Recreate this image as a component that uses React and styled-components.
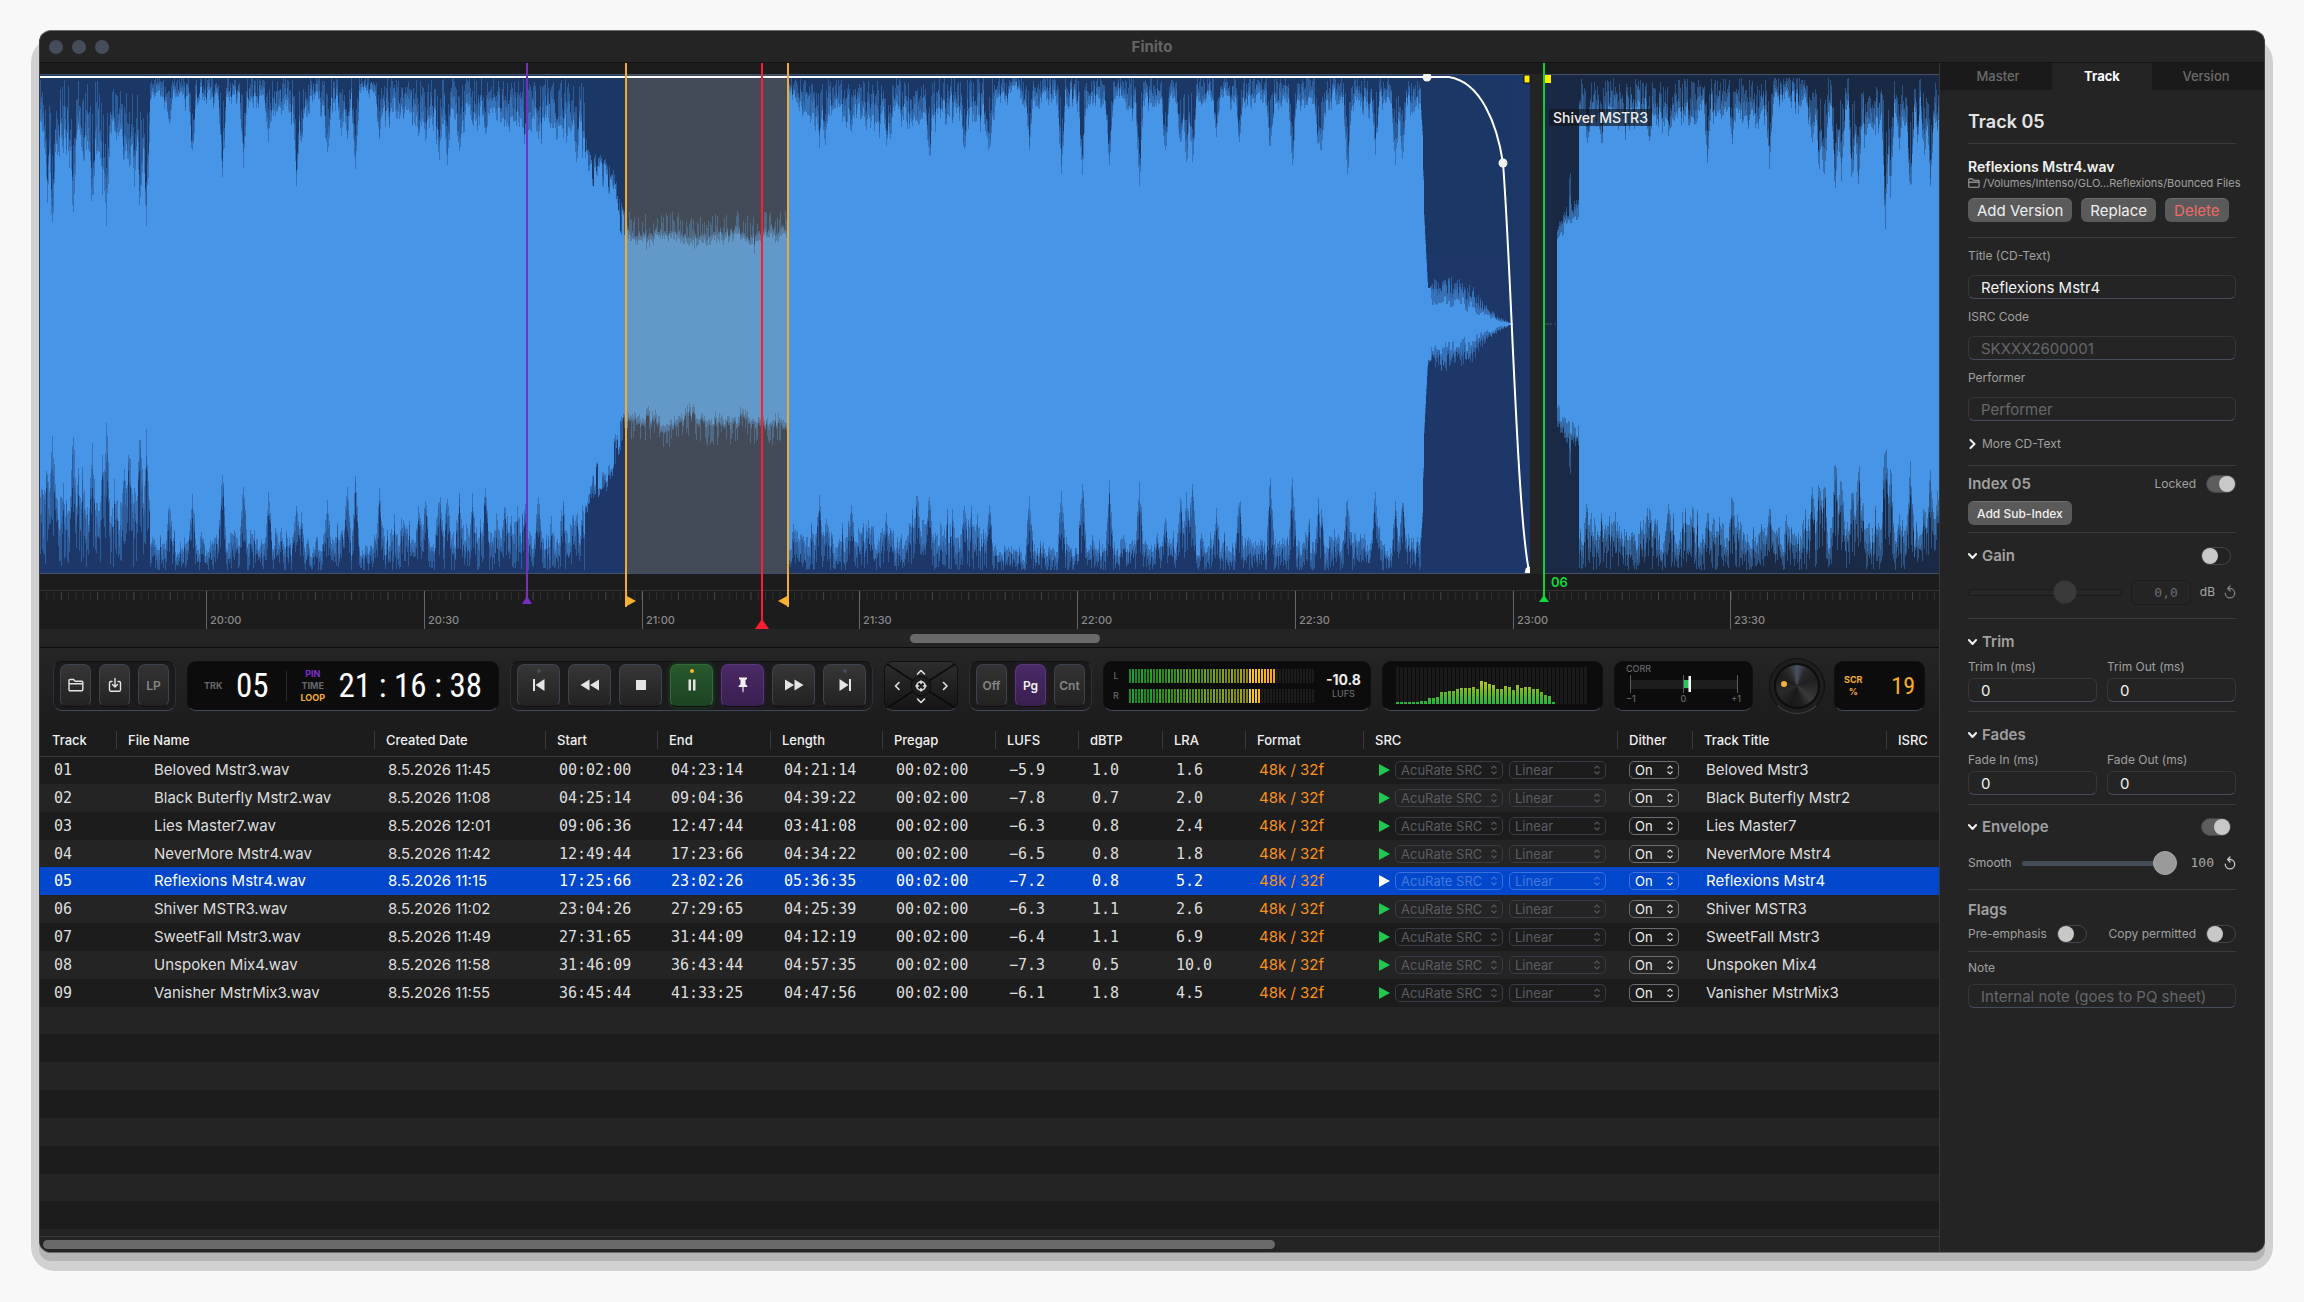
import React from "react";
import styled, { createGlobalStyle, css } from "styled-components";

const SANS = '"Inter", "Liberation Sans", sans-serif';
const NARROW = '"Liberation Sans Narrow", "Roboto Condensed", "Roboto", sans-serif';

const Global = createGlobalStyle`
  *, *::before, *::after { box-sizing: border-box; }
  html, body { margin: 0; background: #f8f8f8; }
  body { font-family: ${SANS}; font-size: 15px; color: #dedede; }
  button, input, select { font-family: inherit; margin: 0; }
`;

/* ---------- window ---------- */

const Page = styled.div`
  display: flex;
  min-height: 100vh;
  padding: 30px 39px 49px;
`;

const Window = styled.main`
  position: relative;
  z-index: 0;
  flex: 1;
  min-width: 0;
  display: flex;
  &::before {
    content: "";
    position: absolute;
    z-index: -1;
    inset: 8px -8px -18px;
    border-radius: 24px;
    background: #d1d1d1;
  }
`;

const Frame = styled.div`
  flex: 1;
  min-width: 0;
  display: flex;
  flex-direction: column;
  overflow: hidden;
  border: 1px solid #3c4049;
  border-top-color: #6a6d6f;
  border-bottom-color: #6a6d6f;
  border-radius: 12px;
  background: #242424;
  box-shadow: 0 8px 0 #b4b4b4;
`;

const TitleBar = styled.header`
  display: grid;
  grid-template-columns: 1fr auto 1fr;
  align-items: center;
  height: 32px;
  padding: 0 9px;
  border-bottom: 1px solid #151515;
`;

const Lights = styled.div`
  display: flex;
  gap: 9px;
`;

const Light = styled.button`
  width: 14px;
  height: 14px;
  padding: 0;
  border: 0;
  border-radius: 50%;
  background: #454c5a;
`;

const WindowTitle = styled.h1`
  margin: 0;
  font-size: 15px;
  line-height: 20px;
  font-weight: 700;
  color: #636466;
`;

const Body = styled.div`
  flex: 1;
  display: flex;
  min-height: 0;
`;

const Editor = styled.div`
  flex: 1;
  min-width: 0;
  display: flex;
  flex-direction: column;
  background: #1c1c1c;
`;

/* ---------- timeline ---------- */

const T0 = 40;
const SPAN = 1899;
const pct = (x) => `${((x - T0) / SPAN) * 100}%`;

const Timeline = styled.section`
  position: relative;
  padding-top: 11px;
  background: #1c1c1c;
`;

const Lane = styled.svg`
  display: block;
  width: 100%;
  height: 500px;
`;

const Ruler = styled.div`
  position: relative;
  height: 39px;
  margin-top: 16px;
  border-top: 1px solid #333;
`;

const RulerTicks = styled.svg`
  display: block;
  width: 100%;
  height: 38px;
`;

const RulerLabel = styled.span.attrs((p) => ({ style: { left: pct(p.$x) } }))`
  position: absolute;
  top: 20px;
  padding-left: 4px;
  font-size: 11px;
  line-height: 18px;
  font-weight: 500;
  color: #8a8a8a;
`;

const Marker = styled.div.attrs((p) => ({ style: { left: pct(p.$x) } }))`
  position: absolute;
  top: 0;
  width: 2px;
  margin-left: -1px;
  height: ${(p) => p.$h}px;
  background: ${(p) => p.$color};
`;

const Flag = styled.svg`
  position: absolute;
  bottom: 0;
  left: ${(p) => p.$left}px;
`;

const ClipName = styled.span.attrs((p) => ({ style: { left: pct(p.$x) } }))`
  position: absolute;
  top: 46px;
  padding: 0 4px;
  font-size: 14px;
  line-height: 17px;
  font-weight: 500;
  color: #eee;
  background: rgba(20, 22, 28, 0.65);
`;

const IndexTag = styled.span.attrs((p) => ({ style: { left: pct(p.$x) } }))`
  position: absolute;
  top: 510px;
  padding-left: 7px;
  font-size: 13px;
  line-height: 18px;
  font-weight: 600;
  color: #14d83c;
`;

const ScrollStrip = styled.div`
  display: flex;
  height: 19px;
  padding-top: 5px;
  background: #242424;
  border-bottom: 1px solid #0c0c0c;
`;

const TimelineThumb = styled.div`
  margin-left: 45.8%;
  width: 10%;
  height: 9px;
  border-radius: 5px;
  background: #6a6a6a;
`;

/* Deterministic pseudo random numbers, so that the wave is stable between renders. */
function hash(n) {
  const s = Math.sin(n * 127.1 + 311.7) * 43758.5453;
  return s - Math.floor(s);
}

/* Quiet moments: position, depth from the top edge, depth from the bottom edge. */
const NOTCHES = [
  [47, 130, 120], [52, 165, 162], [57, 90, 70], [66, 60, 80], [73, 155, 158], [78, 60, 110], [83, 105, 95], [92, 146, 140], [98, 70, 60], [102, 128, 120], [106, 166, 170],
  [116, 80, 90], [124, 100, 128], [129, 108, 138], [134, 120, 100], [140, 150, 160], [146, 152, 148],
  [169, 60, 80], [192, 85, 84], [222, 104, 106], [243, 95, 103], [268, 76, 86], [296, 112, 78],
  [301, 76, 64], [327, 96, 84], [341, 75, 50], [347, 70, 98], [355, 102, 99], [379, 72, 86], [418, 70, 70], [425, 76, 80], [439, 90, 88], [447, 100, 86],
  [459, 94, 82], [472, 60, 84], [485, 64, 88], [504, 60, 76], [524, 70, 64], [538, 72, 88], [563, 60, 74], [576, 104, 70],
  [819, 76, 80], [825, 78, 50], [851, 68, 76], [886, 74, 64], [890, 74, 50], [917, 58, 90], [929, 94, 84], [964, 86, 78], [989, 90, 74],
  [1029, 78, 86], [1061, 104, 94], [1082, 102, 104], [1109, 90, 94], [1139, 114, 98], [1165, 86, 62], [1180, 80, 84], [1186, 98, 90], [1192, 96, 106], [1216, 64, 70],
  [1239, 72, 86], [1270, 86, 104], [1292, 100, 106], [1318, 80, 76], [1321, 90, 66], [1347, 112, 88], [1375, 82, 88], [1395, 102, 74], [1402, 98, 82],
  [1587, 76, 64], [1601, 80, 60], [1649, 80, 74], [1668, 64, 84], [1707, 96, 70], [1732, 76, 92], [1769, 98, 78],
  [1812, 84, 94], [1819, 104, 104], [1824, 122, 98], [1835, 124, 130], [1841, 116, 114], [1852, 120, 100], [1858, 122, 126], [1885, 158, 150], [1890, 132, 124],
  [1899, 84, 64], [1910, 128, 120], [1924, 94, 74], [1930, 116, 116], [1937, 60, 90],
];

function notch(x, side) {
  let d = 0;
  for (const n of NOTCHES) {
    const k = 1 - Math.abs(x - n[0]) / 4;
    if (k > 0) d = Math.max(d, n[side] * Math.pow(k, 0.5));
  }
  return d;
}

function lerp(x, pts) {
  for (let i = 1; i < pts.length; i++) {
    if (x <= pts[i][0]) {
      const [a, b] = pts[i - 1];
      const [c, d] = pts[i];
      return b + ((d - b) * (x - a)) / (c - a);
    }
  }
  return pts[pts.length - 1][1];
}

const BASE_TOP = [[40, 78], [146, 78], [150, 34], [240, 32], [250, 40], [350, 38], [365, 18], [372, 26], [380, 50], [430, 62], [500, 56], [585, 68],
  [790, 26], [810, 54], [900, 50], [990, 56], [1015, 18], [1030, 40], [1200, 36], [1420, 40], [1579, 56], [1680, 52], [1770, 56], [1776, 28], [1805, 44], [1815, 62], [1939, 56]];
const BASE_BOTTOM = [[40, 92], [146, 88], [150, 40], [350, 42], [370, 28], [380, 54], [585, 56], [790, 50], [980, 60], [1000, 30], [1420, 46],
  [1579, 62], [1800, 56], [1939, 60]];

/* Distances from the lane's edge: the body, the middle peaks and the highest peaks. */
function column(x, side) {
  const r1 = hash(x * 2 + side * 1000);
  const r2 = hash(x * 3 + side * 2000 + 7);
  const r3 = hash(Math.floor(x / 2) + side * 3000);
  const r4 = hash(Math.floor(x / 5) * 7 + side * 4000);
  if (x > 584 && x <= 627) {
    const base = lerp(x, [[584, 56], [588, 70], [600, 78], [612, 90], [618, 115], [627, 148]]);
    const body = Math.min(base + 4 + r3 * 34, 160);
    return [body, body - r1 * 10, r2 > 0.5 ? body - r1 * 10 : base + r1 * 10];
  }
  if (x > 627 && x < 789) {
    const body = (side === 1 ? 156 : 148) + Math.sin(x / 9) * 3 + r3 * 8 + r1 * r4 * 14;
    return [body, body - 2 - r1 * 6, body - 4 - (r2 > 0.6 ? r2 * 20 : r1 * 6)];
  }
  if (x > 1420 && x <= 1427) {
    const v = lerp(x, [[1420, 30], [1422, 60], [1424, 150], [1427, 207]]);
    return [v, v - 4, v - 10];
  }
  if (x > 1427 && x <= 1513) {
    const peak = lerp(x, [[1427, 205], [1450, 200], [1472, 210], [1482, 226], [1497, 240], [1513, 249]]);
    const room = 249 - peak;
    const body = x < 1431 ? peak + 8 : peak + room * (0.3 + 0.25 * r3 + 0.2 * r4);
    return [Math.min(248, body), Math.min(248, peak + room * 0.3 * (r1 + r4)), Math.min(248, peak + r1 * room * 0.4)];
  }
  if (x > 1513 && x < 1557) return [249, 249, 249];
  if (x >= 1557 && x < 1579) {
    const v = lerp(x, [[1557, 170], [1566, 156], [1579, 148]]);
    const lift = x > 1568 && x < 1571 ? 34 : 0;
    return [v - r3 * 14, v - 12 - r1 * 8 - lift / 2, v - 14 - r1 * 12 - lift];
  }
  const base = lerp(x, side === 1 ? BASE_TOP : BASE_BOTTOM);
  const soft = base * (0.3 + 0.35 * r3 + 0.35 * r4 + 0.45 * r1 * r1 * r2);
  const quiet = notch(x, side) * (0.8 + r1 * 0.2);
  const body = Math.max(soft, quiet);
  if (quiet > soft * 1.1) {
    return [body, body * (0.7 + r2 * 0.25), body * (0.25 + r1 * 0.65)];
  }
  return [body, body * (0.45 + r2 * 0.5), Math.max(3, body * (0.08 + Math.pow(r1, 1.2) * 0.7))];
}

/* One vertical stroke for each pixel column. */
function wave(from, to, layer) {
  const out = [];
  for (let x = from; x < to; x++) {
    const t = Math.max(3, Math.min(column(x, 1)[layer], 249));
    const b = Math.max(3, Math.min(column(x, 2)[layer], 249));
    out.push(`M${x - T0}.5 ${Math.round(t) + 1}V${Math.round(499 - b)}`);
  }
  return out.join("");
}

const WAVES = [
  [40, 627, "#4795e6"],
  [627, 789, "#6399c8"],
  [789, 1513, "#4795e6"],
  [1557, 1940, "#4795e6"],
].map(([a, b, color]) => ({ color, high: wave(a, b, 2), mid: wave(a, b, 1), body: wave(a, b, 0) }));

const MAJOR = [
  [206, "20:00"], [424, "20:30"], [642, "21:00"], [859, "21:30"],
  [1077, "22:00"], [1295, "22:30"], [1513, "23:00"], [1730, "23:30"],
];

function TimelineView() {
  const minor = [];
  for (let i = 0; i < 262; i++) {
    const x = 206 - 22 * 7.26 + i * 7.26;
    if (x < 1938) minor.push(<rect key={i} x={x - T0} y="1" width="1" height="8" fill={i % 5 === 2 ? "#444" : "#2f2f2f"} />);
  }
  return (
    <Timeline aria-label="Timeline">
      <Lane viewBox={`0 0 ${SPAN} 500`} preserveAspectRatio="none" role="img" aria-label="Waveform">
        <rect width="1490" height="500" fill="#1c3768" />
        <rect x="586" width="163" height="500" fill="#444b58" />
        <rect x="1490" width="15" height="500" fill="#242424" />
        <rect x="1505" width="394" height="500" fill="#1a2945" />
        {WAVES.map((w, i) => (
          <g key={i} stroke={w.color}>
            <path d={w.high} opacity="0.4" />
            <path d={w.mid} opacity="0.4" />
            <path d={w.body} />
          </g>
        ))}
        <path d="M1505 250h11" stroke="#46536b" strokeDasharray="7 2" />
        <path d="M0 .5h1490M1505 .5h394M0 499.5h1490M1505 499.5h394" stroke="#43506a" />
        <path d="M0 3H1409C1441 8 1457 50 1463 89C1471 190 1477 440 1489 497" fill="none" stroke="#fff" strokeWidth="2" />
        <circle cx="1387" cy="3" r="4.5" fill="#f2f2f2" />
        <circle cx="1463" cy="89" r="4.5" fill="#f2f2f2" />
        <path d="M1485 499a4 5 0 0 1 5-6v6z" fill="#fff" />
        <rect x="1484" y="1" width="6" height="8" fill="#ffee00" stroke="#111" strokeWidth="1" />
        <rect x="1505" y="1" width="6" height="8" fill="#ffee00" />
      </Lane>
      <Ruler>
        <RulerTicks viewBox={`0 0 ${SPAN} 38`} preserveAspectRatio="none" aria-hidden="true">
          {minor}
          {MAJOR.map(([x]) => (
            <rect key={x} x={x - T0} width="1" height="38" fill="#666" />
          ))}
        </RulerTicks>
        {MAJOR.map(([x, t]) => (
          <RulerLabel key={t} $x={x}>{t}</RulerLabel>
        ))}
      </Ruler>
      <ClipName $x={1549}>Shiver MSTR3</ClipName>
      <IndexTag $x={1544}>06</IndexTag>
      <Marker $x={527} $h={541} $color="#7a2cc4">
        <Flag $left={-4} width="10" height="8" viewBox="0 0 10 8"><path d="M5 0l5 8H0z" fill="#7a2cc4" /></Flag>
      </Marker>
      <Marker $x={626} $h={544} $color="#f0ab34">
        <Flag $left={0} width="11" height="12" viewBox="0 0 11 12"><path d="M0 0l11 6-11 6z" fill="#f7b233" /></Flag>
      </Marker>
      <Marker $x={788} $h={544} $color="#f0ab34">
        <Flag $left={-9} width="11" height="12" viewBox="0 0 11 12"><path d="M11 0L0 6l11 6z" fill="#f7b233" /></Flag>
      </Marker>
      <Marker $x={762} $h={566} $color="#fa1e32">
        <Flag $left={-6} width="14" height="10" viewBox="0 0 14 10"><path d="M7 0l7 10H0z" fill="#fa1e32" /></Flag>
      </Marker>
      <Marker $x={1544} $h={539} $color="#10cf38">
        <Flag $left={-4} width="10" height="7" viewBox="0 0 10 7"><path d="M5 0l5 7H0z" fill="#14d83c" /></Flag>
      </Marker>
    </Timeline>
  );
}

/* ---------- toolbar ---------- */

const Toolbar = styled.div`
  display: flex;
  align-items: center;
  gap: 11px;
  height: 77px;
  padding: 0 14px 2px 13px;
  background: linear-gradient(#252525, #1c1c1c);
`;

const panel = css`
  flex: none;
  height: 50px;
  border: 1px solid #101010;
  border-bottom-color: #424a5a;
  border-radius: 9px;
`;

const KeyGroup = styled.div`
  ${panel}
  display: flex;
  gap: 8px;
  padding: 2px 6px 3px;
  background: #1b1b1b;
  border-left-color: #2c3038;
  border-right-color: #2c3038;
`;

const TONES = {
  plain: ["linear-gradient(#363636, #222)", "#3d4350", "#e4e4e4", "none"],
  dim: ["linear-gradient(#333, #222)", "#3d4350", "#868686", "none"],
  green: ["linear-gradient(#27592c, #1d4323)", "#34693a", "#e4e4e4", "0 0 5px #1f4d25"],
  purple: ["linear-gradient(#4a2a66, #391f50)", "#583a78", "#f2f2f2", "0 0 5px #2f1a42"],
};

const Key = styled.button`
  position: relative;
  display: grid;
  place-items: center;
  width: ${(p) => (p.$wide ? 43 : 31)}px;
  height: 43px;
  padding: 0;
  border: 1px solid ${(p) => TONES[p.$tone][1]};
  border-bottom-color: #111;
  border-radius: 7px;
  background: ${(p) => TONES[p.$tone][0]};
  color: ${(p) => TONES[p.$tone][2]};
  box-shadow: ${(p) => TONES[p.$tone][3]};
  font-size: 12px;
  font-weight: 600;
`;

const Led = styled.span`
  position: absolute;
  top: 4px;
  width: 4px;
  height: 4px;
  border-radius: 50%;
  background: ${(p) => (p.$lit ? "#ffb52e" : "#454c5a")};
`;

const Display = styled.div`
  ${panel}
  display: flex;
  align-items: center;
  justify-content: ${(p) => (p.$spread ? "space-between" : "flex-start")};
  gap: ${(p) => p.$gap || 0}px;
  width: ${(p) => p.$w}px;
  padding: 0 ${(p) => p.$px}px;
  background: #0c0c0c;
`;

const Digits = styled.span`
  font-family: ${NARROW};
  font-size: ${(p) => (p.$small ? 24 : 33)}px;
  line-height: 36px;
  color: ${(p) => p.$color || "#fff"};
  white-space: pre;
`;

const Rule = styled.span`
  width: 1px;
  height: 30px;
  margin-left: 4px;
  background: #2a2a2a;
`;

const Stack = styled.div`
  display: flex;
  flex-direction: column;
  align-items: center;
`;

const Tiny = styled.span`
  font-size: 9px;
  line-height: ${(p) => p.$lh || 12}px;
  font-weight: ${(p) => (p.$thin ? 500 : 700)};
  color: ${(p) => p.$color || "#66686c"};
`;

const Pad = styled.div`
  ${panel}
  width: 74px;
  padding: 2px;
  background: linear-gradient(#2d2d2d, #151515);
`;

const Loudness = styled.span`
  font-size: 14px;
  line-height: 16px;
  font-weight: 700;
  color: #eee;
`;

const Meters = styled.svg`
  flex: none;
`;

const Knob = styled.div`
  flex: none;
  display: grid;
  place-items: center;
  width: 56px;
  height: 56px;
  margin: 0 -2px 0 5px;
  border-radius: 50%;
  border: 1px solid #111;
  border-bottom-color: #444;
  background: #1e1e1e;
`;

const KnobFace = styled.div`
  display: flex;
  align-items: center;
  width: 46px;
  height: 46px;
  padding: 0 0 3px 5px;
  border-radius: 50%;
  border: 2px solid #0d0d0d;
  background: conic-gradient(#4a5264, #2a2a2a 28deg, #202020 70deg, #2b2b2b 100deg, #3a3a3a 135deg, #1f1f1f 165deg, #191919 200deg, #2a2a2a 250deg, #1d1d1d 300deg, #2a2a2a 332deg, #4a5264);
`;

const KnobDot = styled.span`
  width: 6px;
  height: 6px;
  border-radius: 50%;
  background: #f7b233;
`;

const CorrBox = styled.div`
  ${panel}
  width: 139px;
  padding: 1px 11px 0;
  background: #0c0c0c;
`;

const CorrScale = styled.div`
  display: flex;
  justify-content: space-between;
`;

const CorrBar = styled.svg`
  display: block;
  margin-left: 4px;
`;

const Ico = ({ children, w = 20, h = 20 }) => (
  <svg width={w} height={h} viewBox={`0 0 ${w} ${h}`} fill="currentColor" aria-hidden="true">{children}</svg>
);

const FolderIcon = ({ s = 16 }) => (
  <svg width={s} height={s} viewBox="0 0 16 16" fill="none" stroke="currentColor" strokeWidth="1.4" strokeLinejoin="round" aria-hidden="true">
    <path d="M1 12.5v-9q0-1 1-1h3.6l1.6 1.8h6.6q1 0 1 1v7.2q0 1.200-1.200 1.200H2.200Q1 13.700 1 12.500zM1 6.800h13.800" />
  </svg>
);

const ImportIcon = () => (
  <svg width="16" height="16" viewBox="0 0 16 16" fill="none" stroke="currentColor" strokeWidth="1.400" strokeLinecap="round" strokeLinejoin="round" aria-hidden="true">
    <path d="M5 4.500H3.800Q2.500 4.500 2.500 5.800v7q0 1.400 1.300 1.400h8.400q1.300 0 1.300-1.400v-7q0-1.300-1.300-1.300H11M8 1.500v8.300M5.500 7.500L8 10l2.500-2.500" />
  </svg>
);

const TRANSPORT = [
  ["Previous track", "plain", <path d="M4 4h2v12H4zM15.500 4v12L6.500 10z" />, "off"],
  ["Rewind", "plain", <path d="M9.500 4.500v11L.500 10zM19 4.500v11L10 10z" />],
  ["Stop", "plain", <path d="M5 5h10v10H5z" />],
  ["Pause", "green", <path d="M6.500 4.500h2.500v11H6.500zM11 4.500h2.500v11H11z" />, "on"],
  ["Pin", "purple", <path d="M6 2.500h8v1.600l-1.500 1v4.200q2 1 2 2.700h-3.900V16L10 18l-.600-2v-4H5.500q0-1.700 2-2.700V5.100L6 4.100z" />],
  ["Fast forward", "plain", <path d="M1 4.500v11l9-5.500zM10.500 4.500v11l9-5.500z" />],
  ["Next track", "plain", <path d="M4.500 4v12l9-6zM14 4h2v12h-2z" />, "off"],
];

function MeterBars() {
  const out = [];
  [49, 44].forEach((lit, row) => {
    for (let i = 0; i < 62; i++) {
      const on = i < lit;
      const hue = i < 40 ? 132 - i * 1.9 : 48 - (i - 40) * 1.4;
      const light = i < 40 ? (i % 3 === 1 ? 38 : 32) : 54;
      const fill = on ? `hsl(${hue} ${i < 40 ? 68 : 92}% ${light}%)` : "#1c1c1c";
      out.push(<rect key={`${row}-${i}`} x={i * 3} y={row * 20} width="2" height="14" fill={fill} />);
    }
  });
  return <Meters width="186" height="34" viewBox="0 0 186 34" role="img" aria-label="Level meters">{out}</Meters>;
}

const SPECTRUM = [2, 2, 2, 2, 2, 2, 3, 3, 6, 6, 7, 12, 12, 13, 13, 15, 16, 16, 16, 17, 15, 23, 22, 20, 19, 15, 15, 18, 17, 14, 19, 16, 17, 17, 15, 15, 12, 9, 8, 2, 0, 0, 0, 0, 0, 0, 0, 0];

function Spectrum() {
  return (
    <Meters width="192" height="37" viewBox="0 0 192 37" role="img" aria-label="Spectrum">
      <defs>
        <linearGradient id="spec" gradientUnits="userSpaceOnUse" x1="0" y1="37" x2="0" y2="12">
          <stop offset="0" stopColor="#1fb53a" />
          <stop offset="0.500" stopColor="#6fb52a" />
          <stop offset="1" stopColor="#d8c62c" />
        </linearGradient>
      </defs>
      {SPECTRUM.map((h, i) => (
        <g key={i}>
          <rect x={i * 4} width="3" height="37" fill="#191919" />
          <rect x={i * 4} y={37 - h} width="3" height={h} fill="url(#spec)" />
        </g>
      ))}
    </Meters>
  );
}

function ToolbarView() {
  return (
    <Toolbar role="toolbar" aria-label="Transport">
      <KeyGroup>
        <Key $tone="plain" aria-label="Open"><FolderIcon /></Key>
        <Key $tone="plain" aria-label="Import"><ImportIcon /></Key>
        <Key $tone="dim">LP</Key>
      </KeyGroup>
      <Display $w={312} $px={16} $spread>
        <Tiny>TRK</Tiny>
        <Digits>05</Digits>
        <Rule />
        <Stack>
          <Tiny $color="#7d2ccb">PIN</Tiny>
          <Tiny>TIME</Tiny>
          <Tiny $color="#f5ae2e">LOOP</Tiny>
        </Stack>
        <Digits>21 : 16 : 38</Digits>
      </Display>
      <KeyGroup>
        {TRANSPORT.map(([label, tone, shape, led]) => (
          <Key key={label} $wide $tone={tone} aria-label={label}>
            {led && <Led $lit={led === "on"} />}
            <Ico>{shape}</Ico>
          </Key>
        ))}
      </KeyGroup>
      <Pad role="img" aria-label="Navigation pad">
        <svg width="68" height="44" viewBox="0 0 68 44" fill="none">
          <path d="M0 0l68 44M68 0L0 44" stroke="#0a0a0a" strokeWidth="1.500" />
          <circle cx="34" cy="22" r="10" fill="#1c1c1c" stroke="#0d0d0d" />
          <g stroke="#e4e4e4" strokeWidth="1.600" strokeLinecap="round" strokeLinejoin="round">
            <circle cx="34" cy="22" r="4.200" />
            <path d="M34 17v2.500M34 24.500V27M29 22h2.500M36.500 22H39" />
            <path d="M30.500 10l3.500-3.500 3.500 3.500M30.500 35l3.500 3.500 3.500-3.500M12 18.500L8.500 22l3.500 3.500M56.500 18.500L60 22l-3.500 3.500" />
          </g>
        </svg>
      </Pad>
      <KeyGroup>
        <Key $tone="dim">Off</Key>
        <Key $tone="purple">Pg</Key>
        <Key $tone="dim">Cnt</Key>
      </KeyGroup>
      <Display $w={268} $px={9} $spread>
        <Stack>
          <Tiny $lh={20} $thin>L</Tiny>
          <Tiny $lh={20} $thin>R</Tiny>
        </Stack>
        <MeterBars />
        <Stack>
          <Loudness>-10.8</Loudness>
          <Tiny $thin>LUFS</Tiny>
        </Stack>
      </Display>
      <Display $w={221} $px={13}>
        <Spectrum />
      </Display>
      <CorrBox>
        <Tiny as="div" $thin>CORR</Tiny>
        <CorrBar width="108" height="18" viewBox="0 0 108 18" role="img" aria-label="Correlation">
          <rect y="5" width="108" height="9" fill="#1d1d1d" />
          <path d="M.500 0v18M53.500 0v18M107.500 0v18" stroke="#5a5c60" />
          <rect x="54" y="5" width="5" height="8" fill="#27c65a" />
          <rect x="58.500" y="1" width="2.500" height="16" fill="#fff" />
        </CorrBar>
        <CorrScale>
          <Tiny $thin>−1</Tiny>
          <Tiny $thin>0</Tiny>
          <Tiny $thin>+1</Tiny>
        </CorrScale>
      </CorrBox>
      <Knob role="img" aria-label="Scrub knob"><KnobFace><KnobDot /></KnobFace></Knob>
      <Display $w={91} $px={9} $spread>
        <Stack>
          <Tiny $color="#f5ae2e">SCR</Tiny>
          <Tiny $color="#f5ae2e">%</Tiny>
        </Stack>
        <Digits $small $color="#f5ae2e">19</Digits>
      </Display>
    </Toolbar>
  );
}

/* ---------- track table ---------- */

const TableArea = styled.div`
  flex: 1 1 0;
  min-height: 0;
  overflow: hidden;
`;

const Table = styled.table`
  width: 100%;
  table-layout: fixed;
  border-collapse: collapse;
`;

const Th = styled.th`
  height: 31px;
  padding: 0;
  border-bottom: 1px solid #3a3a3a;
  text-align: left;
  font-size: 13px;
  font-weight: 500;
  color: #f0f0f0;
  white-space: nowrap;
`;

const ThText = styled.span`
  display: block;
  padding-left: 11px;
  line-height: 18px;
  border-left: 1px solid ${(p) => (p.$first ? "transparent" : "#3a3a3a")};
`;

const Tr = styled.tr`
  height: 28px;
  background: ${(p) => (p.$selected ? "#0047cc" : p.$odd ? "#1c1c1c" : "#242424")};
  color: ${(p) => (p.$selected ? "#fff" : "#dedede")};
  &:nth-child(6n + 4) { height: 27px; }
`;

const Td = styled.td`
  padding: 0 0 0 ${(p) => p.$pad || 14}px;
  font-size: 15px;
  line-height: 20px;
  white-space: nowrap;
  color: ${(p) => (p.$amber ? "#f7921e" : "inherit")};
  ${(p) => p.$mono && css`
    font-family: "DejaVu Sans Mono", "Liberation Mono", monospace;
  `}
`;

const Controls = styled.div`
  display: flex;
  align-items: center;
  gap: 6px;
`;

const Play = styled.svg`
  flex: none;
  margin-right: -1px;
  color: ${(p) => (p.$selected ? "#fff" : "#1fc84e")};
`;

const Picker = styled.span`
  position: relative;
  display: inline-flex;
  color: ${(p) => (p.$selected ? (p.$dim ? "#4478da" : "#fff") : p.$dim ? "#5a5d62" : "#f0f0f0")};
  svg { position: absolute; right: 5px; top: 4px; opacity: 0.9; pointer-events: none; }
`;

const Select = styled.select`
  appearance: none;
  width: ${(p) => p.$w}px;
  height: 18px;
  padding: 0 5px;
  border: 1px solid ${(p) => (p.$selected ? "#3a70dd" : p.$dim ? "#363b45" : "#6a6c70")};
  border-radius: 5px;
  background: transparent;
  color: inherit;
  opacity: 1;
  font-size: 13px;
  line-height: 16px;
`;

const HScroll = styled.div`
  height: 16px;
  padding: 3px 0 0 3px;
  border-top: 1px solid #383838;
  background: #242424;
`;

const HThumb = styled.div`
  width: 65%;
  height: 9px;
  border-radius: 5px;
  background: #6a6a6a;
`;

const COLUMNS = [
  ["Track", 76], ["File Name", 258], ["Created Date", 171], ["Start", 112], ["End", 113], ["Length", 112], ["Pregap", 113],
  ["LUFS", 83], ["dBTP", 84], ["LRA", 83], ["Format", 118], ["SRC", 254], ["Dither", 75], ["Track Title", 194], ["ISRC", null],
];

const TRACKS = [
  ["01", "Beloved Mstr3", "8.5.2026 11:45", "00:02:00", "04:23:14", "04:21:14", "−5.9", "1.0", "1.6"],
  ["02", "Black Buterfly Mstr2", "8.5.2026 11:08", "04:25:14", "09:04:36", "04:39:22", "−7.8", "0.7", "2.0"],
  ["03", "Lies Master7", "8.5.2026 12:01", "09:06:36", "12:47:44", "03:41:08", "−6.3", "0.8", "2.4"],
  ["04", "NeverMore Mstr4", "8.5.2026 11:42", "12:49:44", "17:23:66", "04:34:22", "−6.5", "0.8", "1.8"],
  ["05", "Reflexions Mstr4", "8.5.2026 11:15", "17:25:66", "23:02:26", "05:36:35", "−7.2", "0.8", "5.2"],
  ["06", "Shiver MSTR3", "8.5.2026 11:02", "23:04:26", "27:29:65", "04:25:39", "−6.3", "1.1", "2.6"],
  ["07", "SweetFall Mstr3", "8.5.2026 11:49", "27:31:65", "31:44:09", "04:12:19", "−6.4", "1.1", "6.9"],
  ["08", "Unspoken Mix4", "8.5.2026 11:58", "31:46:09", "36:43:44", "04:57:35", "−7.3", "0.5", "10.0"],
  ["09", "Vanisher MstrMix3", "8.5.2026 11:55", "36:45:44", "41:33:25", "04:47:56", "−6.1", "1.8", "4.5"],
];

const EMPTY_ROWS = [9, 10, 11, 12, 13, 14, 15, 16, 17];

function PopUp({ label, value, width, dim, selected }) {
  return (
    <Picker $dim={dim} $selected={selected}>
      <Select aria-label={label} $w={width} $dim={dim} $selected={selected} disabled={dim} defaultValue={value}>
        <option>{value}</option>
      </Select>
      <svg width="8" height="10" viewBox="0 0 8 10" fill="none" stroke="currentColor" strokeWidth="1.200" aria-hidden="true">
        <path d="M1.500 3.500L4 1l2.500 2.500M1.500 6.500L4 9l2.500-2.500" />
      </svg>
    </Picker>
  );
}

function TrackTable() {
  return (
    <TableArea>
      <Table>
        <colgroup>
          {COLUMNS.map(([name, w]) => <col key={name} width={w || undefined} />)}
        </colgroup>
        <thead>
          <tr>
            {COLUMNS.map(([name], i) => (
              <Th key={name} scope="col"><ThText $first={i === 0}>{name}</ThText></Th>
            ))}
          </tr>
        </thead>
        <tbody>
          {TRACKS.map(([no, name, date, start, end, length, lufs, dbtp, lra], i) => {
            const selected = no === "05";
            return (
              <Tr key={no} $odd={i % 2 === 0} $selected={selected} aria-selected={selected}>
                <Td $mono>{no}</Td>
                <Td $pad={38}>{name}.wav</Td>
                <Td>{date}</Td>
                <Td $mono>{start}</Td>
                <Td $mono>{end}</Td>
                <Td $mono>{length}</Td>
                <Td $mono>00:02:00</Td>
                <Td $mono>{lufs}</Td>
                <Td $mono>{dbtp}</Td>
                <Td $mono>{lra}</Td>
                <Td $amber>48k / 32f</Td>
                <Td $pad={16}>
                  <Controls>
                    <Play $selected={selected} width="11" height="12" viewBox="0 0 11 12" aria-hidden="true"><path d="M0 0l11 6-11 6z" fill="currentColor" /></Play>
                    <PopUp label={`SRC engine ${no}`} value="AcuRate SRC" width={108} dim selected={selected} />
                    <PopUp label={`SRC phase ${no}`} value="Linear" width={97} dim selected={selected} />
                  </Controls>
                </Td>
                <Td $pad={12}>
                  <Controls><PopUp label={`Dither ${no}`} value="On" width={50} selected={selected} /></Controls>
                </Td>
                <Td>{name}</Td>
                <Td />
              </Tr>
            );
          })}
          {EMPTY_ROWS.map((i) => (
            <Tr key={i} $odd={i % 2 === 0} aria-hidden="true"><Td colSpan={15} /></Tr>
          ))}
        </tbody>
      </Table>
    </TableArea>
  );
}

/* ---------- inspector ---------- */

const Inspector = styled.aside`
  flex: none;
  width: 325px;
  border-left: 1px solid #383838;
  background: #242424;
`;

const Tabs = styled.div`
  display: grid;
  grid-template-columns: 1fr 100px 1fr;
`;

const Tab = styled.button`
  height: 27px;
  padding: 0 0 2px;
  border: 0;
  font-size: 13px;
  font-weight: ${(p) => (p.$active ? 700 : 500)};
  color: ${(p) => (p.$active ? "#fff" : "#6c6c6c")};
  background: ${(p) => (p.$active ? "#242424" : "#1a1a1a")};
  &:first-child { padding-left: 4px; }
  &:last-child { padding-right: 4px; }
`;

const Content = styled.div`
  padding: 18px 28px 0;
`;

const Section = styled.section`
  display: flex;
  flex-direction: column;
  height: ${(p) => p.$h}px;
  padding-top: ${(p) => p.$pt || 0}px;
  border-bottom: ${(p) => (p.$last ? "0" : "1px solid #3b3b3b")};
`;

const Title = styled.h2`
  margin: 0;
  font-size: 18px;
  line-height: 28px;
  font-weight: 600;
  color: #e4e4e4;
`;

const FileName = styled.h3`
  margin: 0;
  font-size: 14px;
  line-height: 18px;
  font-weight: 600;
  color: #f0f0f0;
`;

const PathLine = styled.p`
  display: flex;
  align-items: center;
  gap: 3px;
  margin: 0 0 8px;
  font-size: 11px;
  line-height: 14px;
  color: #a2a2a2;
  white-space: nowrap;
  svg { flex: none; }
`;

const Row = styled.div`
  display: flex;
  align-items: center;
  gap: ${(p) => p.$gap || 0}px;
  justify-content: ${(p) => (p.$between ? "space-between" : "flex-start")};
  height: ${(p) => p.$h || 24}px;
  margin-top: ${(p) => p.$mt || 0}px;
  padding-right: ${(p) => p.$pr || 0}px;
`;

const Push = styled.button`
  height: 24px;
  padding: 0 9px;
  border: 0;
  border-top: 1px solid #707070;
  border-radius: 6px;
  background: #5a5a5a;
  color: ${(p) => (p.$danger ? "#ef6a66" : "#f0f0f0")};
  font-size: ${(p) => (p.$small ? 12 : 15)}px;
  line-height: 22px;
  font-weight: ${(p) => (p.$small ? 500 : 400)};
`;

const Field = styled.label`
  display: flex;
  flex: ${(p) => (p.$grow ? "1 1 0" : "none")};
  flex-direction: column;
  min-width: 0;
  gap: ${(p) => p.$gap}px;
  font-size: 12px;
  line-height: 18px;
  color: #a0a0a0;
`;

const Input = styled.input`
  width: 100%;
  height: 24px;
  padding: 0 12px;
  border: 1px solid #363636;
  border-bottom-color: #454d5c;
  border-radius: 6px;
  background: transparent;
  color: #f2f2f2;
  font-size: 15px;
  &::placeholder { color: #66676b; opacity: 1; }
`;

const Fields = styled.div`
  display: flex;
  gap: 10px;
`;

const Disclosure = styled.button`
  display: flex;
  align-items: center;
  gap: 5px;
  padding: 0;
  border: 0;
  background: none;
  color: #a0a0a0;
  font-size: ${(p) => (p.$plain ? 12 : 15)}px;
  font-weight: ${(p) => (p.$plain ? 400 : 600)};
  line-height: 20px;
  svg { color: #f0f0f0; }
`;

const Heading = styled.h3`
  margin: 0;
  font-size: 15px;
  line-height: 20px;
  font-weight: 600;
  color: #a0a0a0;
`;

const SwitchLabel = styled.label`
  display: flex;
  align-items: center;
  gap: 10px;
  font-size: 12px;
  line-height: 18px;
  color: #a0a0a0;
`;

const Switch = styled.input`
  appearance: none;
  flex: none;
  display: flex;
  width: 30px;
  height: 18px;
  padding: 0 1px 0 0;
  border: 1px solid #40444c;
  border-radius: 9px;
  align-items: center;
  background: #222;
  &::before {
    content: "";
    width: 16px;
    height: 16px;
    border-radius: 50%;
    background: #c8c8c8;
  }
  &:checked { background: #5d5d5d; justify-content: flex-end; padding: 0; }
`;

const Range = styled.input`
  appearance: none;
  flex: 1;
  min-width: 0;
  height: 24px;
  background: transparent;
  &::-webkit-slider-runnable-track {
    height: ${(p) => (p.disabled ? 7 : 5)}px;
    border-radius: 3px;
    border: ${(p) => (p.disabled ? "1px solid #1b1b1b" : "0")};
    background: ${(p) => (p.disabled ? "#262626" : "#454c5a")};
  }
  &::-webkit-slider-thumb {
    appearance: none;
    width: 24px;
    height: 24px;
    margin-top: -10px;
    border-radius: 50%;
    background: ${(p) => (p.disabled ? "#3a3a3a" : "#9a9a9a")};
    border: 1px solid ${(p) => (p.disabled ? "#303030" : "#a8a8a8")};
  }
`;

const GainInput = styled.input`
  flex: none;
  width: 60px;
  height: 25px;
  padding: 0 12px;
  border: 1px solid #1c1c1c;
  border-radius: 6px;
  background: transparent;
  text-align: right;
  font-family: "DejaVu Sans Mono", monospace !important;
  font-size: 13px;
  color: #6a6d73;
`;

const Unit = styled.span`
  font-size: 12px;
  line-height: 18px;
  color: #a8a8a8;
  ${(p) => p.$mono && css`
    margin-left: 4px;
    font-family: "DejaVu Sans Mono", monospace;
    font-size: 13px;
  `}
`;

const IconButton = styled.button`
  display: grid;
  padding: 0;
  border: 0;
  background: none;
  color: ${(p) => (p.$dim ? "#7c7c7c" : "#c8c8c8")};
`;

const Chevron = ({ right }) => (
  <svg width="9" height="10" viewBox="0 0 9 10" fill="none" stroke="currentColor" strokeWidth="2" strokeLinecap="round" strokeLinejoin="round" aria-hidden="true">
    <path d={right ? "M2.500 1l4 4-4 4" : "M.900 3l3.600 4 3.600-4"} />
  </svg>
);

const ResetIcon = () => (
  <svg width="12" height="14" viewBox="0 0 12 14" fill="none" stroke="currentColor" strokeWidth="1.300" strokeLinecap="round" strokeLinejoin="round" aria-hidden="true">
    <path d="M4.200 3.500H6A4.700 4.700 0 1 1 1.300 8.200M6 1L3.600 3.500 6 6" />
  </svg>
);

function InspectorView() {
  return (
    <Inspector aria-label="Inspector">
      <Tabs role="tablist">
        <Tab role="tab">Master</Tab>
        <Tab role="tab" $active aria-selected="true">Track</Tab>
        <Tab role="tab">Version</Tab>
      </Tabs>
      <Content>
        <Section $h={36}><Title>Track 05</Title></Section>
        <Section $h={94} $pt={14}>
          <FileName>Reflexions Mstr4.wav</FileName>
          <PathLine><FolderIcon s={12} />/Volumes/Intenso/GLO…Reflexions/Bounced Files</PathLine>
          <Row $gap={9}>
            <Push>Add Version</Push>
            <Push>Replace</Push>
            <Push $danger>Delete</Push>
          </Row>
        </Section>
        <Section $h={228} $pt={9}>
          <Field $gap={10}>Title (CD-Text)<Input defaultValue="Reflexions Mstr4" /></Field>
          <Row $h={9} />
          <Field $gap={10}>ISRC Code<Input placeholder="SKXXX2600001" /></Field>
          <Row $h={9} />
          <Field $gap={10}>Performer<Input placeholder="Performer" /></Field>
          <Row $mt={11}><Disclosure $plain><Chevron right />More CD-Text</Disclosure></Row>
        </Section>
        <Section $h={67} $pt={6}>
          <Row $between>
            <Heading>Index 05</Heading>
            <SwitchLabel>Locked<Switch type="checkbox" defaultChecked /></SwitchLabel>
          </Row>
          <Row $mt={5}><Push $small>Add Sub-Index</Push></Row>
        </Section>
        <Section $h={86} $pt={11}>
          <Row $between $pr={5}>
            <Disclosure><Chevron />Gain</Disclosure>
            <Switch type="checkbox" aria-label="Gain" />
          </Row>
          <Row $h={26} $mt={11} $gap={9}>
            <Range type="range" disabled min="0" max="100" defaultValue="66" aria-label="Gain amount" />
            <GainInput disabled defaultValue="0,0" aria-label="Gain in dB" />
            <Unit>dB</Unit>
            <IconButton $dim aria-label="Reset gain"><ResetIcon /></IconButton>
          </Row>
        </Section>
        <Section $h={93} $pt={11}>
          <Row><Disclosure><Chevron />Trim</Disclosure></Row>
          <Row $h={4} />
          <Fields>
            <Field $grow $gap={2}>Trim In (ms)<Input defaultValue="0" /></Field>
            <Field $grow $gap={2}>Trim Out (ms)<Input defaultValue="0" /></Field>
          </Fields>
        </Section>
        <Section $h={93} $pt={11}>
          <Row><Disclosure><Chevron />Fades</Disclosure></Row>
          <Row $h={4} />
          <Fields>
            <Field $grow $gap={2}>Fade In (ms)<Input defaultValue="0" /></Field>
            <Field $grow $gap={2}>Fade Out (ms)<Input defaultValue="0" /></Field>
          </Fields>
        </Section>
        <Section $h={85} $pt={10}>
          <Row $between $pr={5}>
            <Disclosure><Chevron />Envelope</Disclosure>
            <Switch type="checkbox" defaultChecked aria-label="Envelope" />
          </Row>
          <Row $h={26} $mt={11} $gap={10}>
            <Unit>Smooth</Unit>
            <Range type="range" min="0" max="100" defaultValue="100" aria-label="Smooth amount" />
            <Unit $mono>100</Unit>
            <IconButton aria-label="Reset envelope"><ResetIcon /></IconButton>
          </Row>
        </Section>
        <Section $h={62} $pt={8}>
          <Row><Heading>Flags</Heading></Row>
          <Row $between>
            <SwitchLabel>Pre-emphasis<Switch type="checkbox" /></SwitchLabel>
            <SwitchLabel>Copy permitted<Switch type="checkbox" /></SwitchLabel>
          </Row>
        </Section>
        <Section $h={70} $pt={7} $last>
          <Field $gap={7}>Note<Input placeholder="Internal note (goes to PQ sheet)" /></Field>
        </Section>
      </Content>
    </Inspector>
  );
}

export default function App() {
  return (
    <>
      <Global />
      <Page>
        <Window>
          <Frame>
            <TitleBar>
              <Lights>
                <Light aria-label="Close" />
                <Light aria-label="Minimise" />
                <Light aria-label="Zoom" />
              </Lights>
              <WindowTitle>Finito</WindowTitle>
            </TitleBar>
            <Body>
              <Editor>
                <TimelineView />
                <ScrollStrip><TimelineThumb /></ScrollStrip>
                <ToolbarView />
                <TrackTable />
                <HScroll><HThumb /></HScroll>
              </Editor>
              <InspectorView />
            </Body>
          </Frame>
        </Window>
      </Page>
    </>
  );
}
